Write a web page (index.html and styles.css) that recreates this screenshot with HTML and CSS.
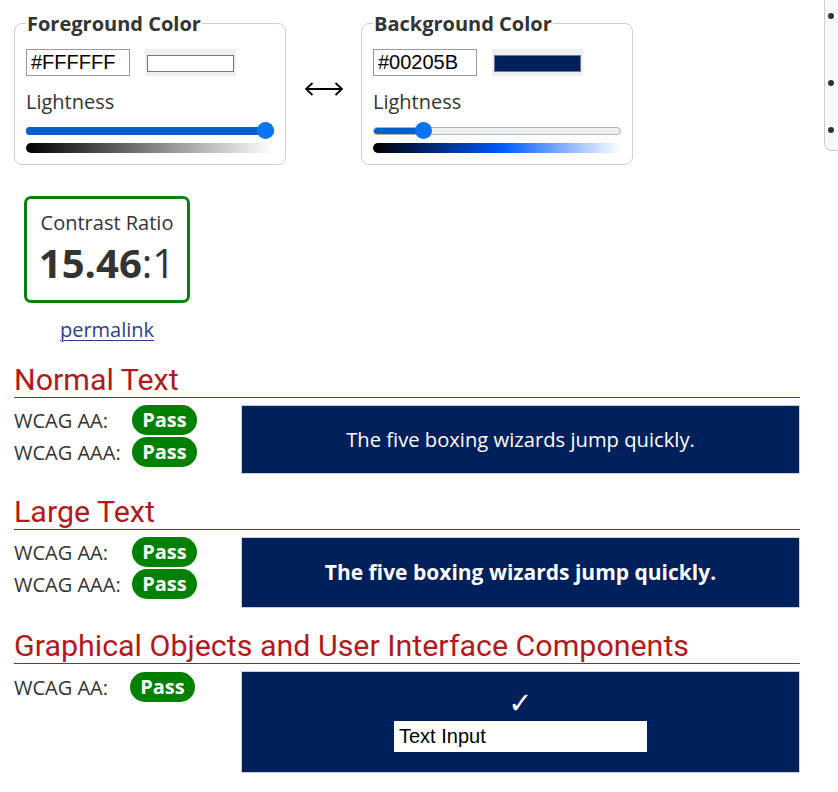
FILE: index.html
```html
<!DOCTYPE html>
<html lang="en">
<head>
<meta charset="utf-8">
<title>Contrast Checker</title>
<link rel="stylesheet" href="styles.css">
</head>
<body>
<div class="page">
  <main class="main">
    <div class="pickers">
      <fieldset class="picker">
        <legend>Foreground Color</legend>
        <div class="picker-inputs">
          <input class="hex" type="text" value="#FFFFFF">
          <span class="swatch"><span class="swatch-fill swatch-fg"></span></span>
        </div>
        <div class="picker-label">Lightness</div>
        <div class="slider" style="--p: 1">
          <div class="track"><div class="track-fill"></div></div>
          <div class="thumb"></div>
        </div>
        <div class="gradient gradient-fg"></div>
      </fieldset>

      <div class="swap" aria-label="swap colors">
        <svg width="38" height="14" viewBox="0 0 38 14" aria-hidden="true">
          <path d="M1 7 H37" stroke="#000" stroke-width="1.8" fill="none"/>
          <path d="M7.5 1 L1 7 L7.5 13" stroke="#000" stroke-width="1.8" fill="none"/>
          <path d="M30.5 1 L37 7 L30.5 13" stroke="#000" stroke-width="1.8" fill="none"/>
        </svg>
      </div>

      <fieldset class="picker">
        <legend>Background Color</legend>
        <div class="picker-inputs">
          <input class="hex" type="text" value="#00205B">
          <span class="swatch"><span class="swatch-fill swatch-bg"></span></span>
        </div>
        <div class="picker-label">Lightness</div>
        <div class="slider" style="--p: 0.18">
          <div class="track track-empty"><div class="track-fill"></div></div>
          <div class="thumb"></div>
        </div>
        <div class="gradient gradient-bg"></div>
      </fieldset>
    </div>

    <div class="ratio-block">
      <div class="ratio-box">
        <div class="ratio-title">Contrast Ratio</div>
        <div class="ratio-value"><b>15.46</b>:1</div>
      </div>
      <a class="permalink" href="#">permalink</a>
    </div>

    <section class="section">
      <h2 class="section-title">Normal Text</h2>
      <div class="results">
        <div class="checks">
          <span class="check-label">WCAG AA:</span><span class="pass">Pass</span>
          <span class="check-label">WCAG AAA:</span><span class="pass">Pass</span>
        </div>
        <div class="sample sample-normal">The five boxing wizards jump quickly.</div>
      </div>
    </section>

    <section class="section">
      <h2 class="section-title">Large Text</h2>
      <div class="results">
        <div class="checks">
          <span class="check-label">WCAG AA:</span><span class="pass">Pass</span>
          <span class="check-label">WCAG AAA:</span><span class="pass">Pass</span>
        </div>
        <div class="sample sample-large">The five boxing wizards jump quickly.</div>
      </div>
    </section>

    <section class="section">
      <h2 class="section-title">Graphical Objects and User Interface Components</h2>
      <div class="results">
        <div class="checks checks-narrow">
          <span class="check-label">WCAG AA:</span><span class="pass">Pass</span>
        </div>
        <div class="sample sample-ui">
          <span class="ui-check">&#10003;</span>
          <input class="ui-input" type="text" value="Text Input">
        </div>
      </div>
    </section>
  </main>

  <aside class="aside" aria-hidden="true">
    <ul class="aside-list">
      <li class="aside-item aside-item-1"></li>
      <li class="aside-item aside-item-2"></li>
      <li class="aside-item aside-item-3"></li>
    </ul>
  </aside>
</div>
</body>
</html>
```

FILE: styles.css
```css
* { box-sizing: border-box; }

html, body {
  margin: 0;
  padding: 0;
  background: #fff;
  overflow: hidden;
}

body {
  font-family: "Open Sans", "Liberation Sans", sans-serif;
  font-size: 20px;
  line-height: 27px;
  color: #333;
}

.page {
  display: flex;
  align-items: flex-start;
}

.main {
  flex: 0 0 786px;
  margin-left: 14px;
  padding-top: 10px;
}

/* ---------- pickers ---------- */
.pickers {
  display: flex;
  align-items: center;
}

.picker {
  width: 272px;
  margin: 0;
  padding: 0 11px 11px;
  border: 1px solid #cfcfcf;
  border-radius: 8px;
  min-width: 0;
}

.picker legend {
  padding: 0 1px;
  font-weight: 700;
  font-size: 20px;
  line-height: 27px;
  color: #333;
}

.picker-inputs {
  display: flex;
  align-items: center;
  margin-top: 12px;
}

.hex {
  width: 104px;
  height: 27px;
  margin: 0;
  padding: 0 4px;
  border: 1px solid #999;
  border-radius: 0;
  font-family: "Liberation Sans", Arial, sans-serif;
  font-size: 20px;
  color: #000;
  background: #fff;
}

.swatch {
  display: block;
  width: 91px;
  height: 27px;
  margin-left: 15px;
  padding: 6px 2px 4px;
  background: #efefef;
}

.swatch-fill {
  display: block;
  height: 100%;
  border: 1px solid #777;
}

.swatch-fg { background: #fff; }
.swatch-bg { background: #00205b; border-color: #6d7a90; }

.picker-label {
  margin-top: 12px;
  font-size: 20px;
  line-height: 27px;
}

.slider {
  position: relative;
  height: 17px;
  margin-top: 7px;
  display: flex;
  align-items: center;
}

.track {
  width: 100%;
  height: 8px;
  border-radius: 4px;
  overflow: hidden;
  background: #0b5ed0;
}

.track-empty {
  background: #efefef;
  border: 1px solid #b3b3b3;
}

.track-fill {
  height: 100%;
  width: calc(var(--p) * (100% - 17px) + 8.5px);
  background: #0b5ed0;
}

.thumb {
  position: absolute;
  top: 0;
  left: calc(var(--p) * (100% - 17px));
  width: 17px;
  height: 17px;
  border-radius: 50%;
  background: #0b74f5;
}

.gradient {
  height: 10px;
  margin-top: 4px;
  border-radius: 5px 0 0 5px;
}

.gradient-fg { background: linear-gradient(to right, #000, #fff); }
.gradient-bg { background: linear-gradient(to right, #000, hsl(219, 100%, 50%) 52%, #fff); }

.swap {
  width: 75px;
  display: flex;
  justify-content: center;
  padding-top: 2px;
}

.swap svg { display: block; }

/* ---------- ratio ---------- */
.ratio-block {
  margin-top: 31px;
  margin-left: 10px;
  width: 166px;
  display: flex;
  flex-direction: column;
  align-items: center;
}

.ratio-box {
  width: 166px;
  height: 107px;
  padding-top: 10px;
  border: 3px solid #0a800a;
  border-radius: 7px;
  text-align: center;
}

.ratio-title {
  font-size: 20px;
  line-height: 27px;
}

.ratio-value {
  margin-top: 5px;
  font-size: 40px;
  line-height: 44px;
  font-weight: 400;
}

.ratio-value b { font-weight: 700; }

.permalink {
  margin-top: 13px;
  font-size: 20px;
  line-height: 27px;
  color: #2c3e8c;
  text-decoration: underline;
  text-underline-offset: 3px;
  text-decoration-thickness: 1px;
}

/* ---------- sections ---------- */
.section { margin-top: 21px; }
.ratio-block + .section { margin-top: 20px; }

.section-title {
  margin: 0;
  font-family: Roboto, "Liberation Sans", sans-serif;
  font-weight: 400;
  font-size: 30.4px;
  line-height: 34px;
  color: #b0191e;
  border-bottom: 1px solid #b0191e;
}

.results {
  display: grid;
  grid-template-columns: 227px 1fr;
  align-items: start;
  margin-top: 7px;
}

.checks {
  display: grid;
  grid-template-columns: 118px 65px;
  grid-auto-rows: 30px;
  row-gap: 2px;
  align-items: center;
}

.checks-narrow {
  grid-template-columns: 116px 65px;
  margin-top: 1px;
}

.check-label {
  font-size: 20px;
  line-height: 27px;
  white-space: nowrap;
}

.pass {
  display: block;
  height: 30px;
  border-radius: 15px;
  background: #008000;
  color: #fff;
  font-weight: 700;
  font-size: 20px;
  line-height: 30px;
  text-align: center;
}

.sample {
  display: flex;
  align-items: center;
  justify-content: center;
  background: #00205b;
  color: #fff;
  border: 1px solid #c9d0d8;
  font-size: 20.2px;
}

.sample-normal { height: 69px; }

.sample-large {
  height: 71px;
  font-weight: 700;
  font-size: 21px;
}

.sample-ui {
  height: 102px;
  flex-direction: column;
  justify-content: flex-start;
  padding-top: 16px;
}

.ui-check {
  font-family: "DejaVu Sans", sans-serif;
  font-size: 29px;
  line-height: 30px;
  color: #fff;
}

.ui-input {
  width: 253px;
  height: 31px;
  margin-top: 3px;
  padding: 0 5px;
  border: 0;
  border-radius: 0;
  background: #fff;
  color: #000;
  font-family: "Liberation Sans", Arial, sans-serif;
  font-size: 20px;
}

/* ---------- right sidebar (cut off at the window edge) ---------- */
.aside {
  flex: 0 0 14px;
  margin-left: 24px;
  height: 151px;
  background: #f8f8f8;
  border-left: 1px solid #cdcdcd;
  border-bottom: 1px solid #cdcdcd;
  border-bottom-left-radius: 8px;
  padding-left: 3px;
}

.aside-list {
  margin: 0;
  padding: 0;
  list-style: none;
}

.aside-item { padding-top: 13px; }

.aside-item::before {
  content: "";
  display: block;
  width: 6px;
  height: 6px;
  border-radius: 50%;
  background: #333;
}

.aside-item-1 { height: 67px; }
.aside-item-2 { height: 47px; }
.aside-item-3 { height: 35px; }
```
